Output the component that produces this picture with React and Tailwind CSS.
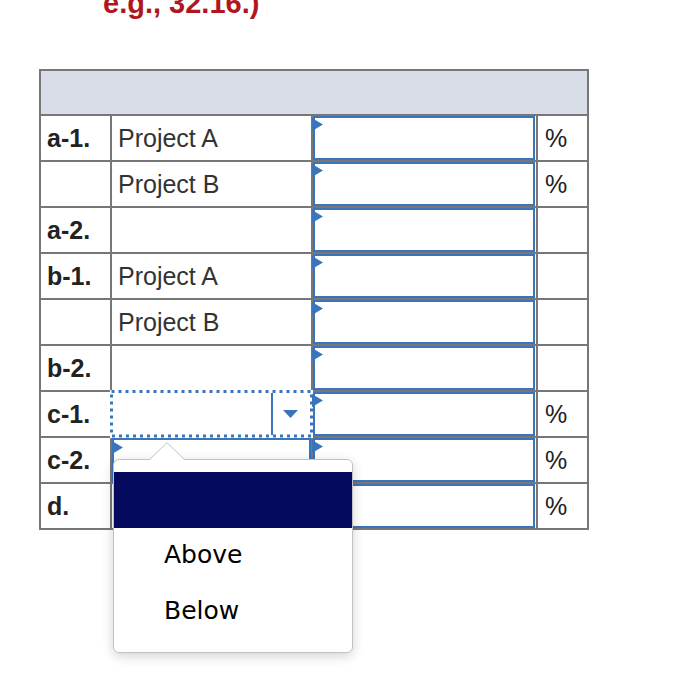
import React from "react";

const rows = [
  { label: "a-1.", name: "Project A", pct: true },
  { label: "", name: "Project B", pct: true },
  { label: "a-2.", name: "", pct: false },
  { label: "b-1.", name: "Project A", pct: false },
  { label: "", name: "Project B", pct: false },
  { label: "b-2.", name: "", pct: false },
  { label: "c-1.", name: "", pct: true, select: "focus" },
  { label: "c-2.", name: "", pct: true, select: "plain" },
  { label: "d.", name: "", pct: true },
];

function Marker({ className = "" }) {
  return (
    <svg
      className={"absolute " + className}
      width="11"
      height="13"
      viewBox="0 0 11 13"
    >
      <polygon points="0,0 11,6.5 0,13" fill="#3a74ba" />
    </svg>
  );
}

function Row({ r }) {
  return (
    <div className="grid h-[46px] grid-cols-[71px_201px_225px_49px] border-x-2 border-b-2 border-[#777777]">
      <div className="flex items-center border-r-2 border-[#777777] pl-[6px] pt-[2px] text-[25px] font-bold text-[#222222]">
        {r.label}
      </div>
      <div className="relative flex items-center border-r-2 border-[#777777] pl-[6px] pt-[2px] text-[25px] text-[#333333]">
        {r.name}
        {r.select === "focus" && (
          <div className="absolute inset-[-2px] z-10 flex bg-white p-[3px]">
            <svg
              className="absolute left-0 top-0"
              width="203"
              height="48"
              viewBox="0 0 203 48"
            >
              <rect
                x="1.5"
                y="1.5"
                width="200"
                height="44.5"
                fill="none"
                stroke="#3a74ba"
                strokeWidth="3"
                strokeDasharray="3 4"
              />
            </svg>
            <div className="flex-1" />
            <div className="flex w-[39px] items-center justify-center border-l-2 border-[#3a74ba] pr-[3px]">
              <svg width="15" height="8" viewBox="0 0 15 8">
                <polygon points="0,0 15,0 7.5,8" fill="#3a74ba" />
              </svg>
            </div>
          </div>
        )}
        {r.select === "plain" && (
          <div className="absolute inset-0 border-2 border-[#3a74ba] bg-white">
            <Marker className="left-[-2px] top-[1px]" />
          </div>
        )}
      </div>
      <div className="relative border-r-2 border-[#777777] pr-[1px]">
        <div className="h-full w-full border-2 border-[#3a74ba] bg-white" />
        <Marker className="left-[-1px] top-[2px] z-20" />
      </div>
      <div className="flex items-center pl-[7px] pt-[2px] text-[25px] text-[#222222]">
        {r.pct ? "%" : ""}
      </div>
    </div>
  );
}

export default function App() {
  return (
    <div className="min-h-[682px] w-[674px] bg-white">
      <div className="flex h-[69px] items-start pl-[103px]">
        <div
          className="-mt-[11px] text-[29px] font-bold leading-none text-[#b0161f]"
          style={{ fontFamily: '"Liberation Sans", Arial, sans-serif' }}
        >
          e.g., 32.16.)
        </div>
      </div>

      <div
        className="relative ml-[39px] w-[550px]"
        style={{ fontFamily: '"Liberation Sans", Arial, sans-serif' }}
      >
        <div className="h-[47px] border-2 border-[#777777] bg-[#d9dde7]" />
        {rows.map((r, i) => (
          <Row key={i} r={r} />
        ))}

        {/* dropdown popup */}
        <div className="absolute left-[74px] top-[390px] z-30 w-[240px]">
          <div className="rounded-[6px] border border-[#c2c2c2] bg-white pb-[12px] pt-[12px] shadow-[0_3px_12px_rgba(0,0,0,0.18)]">
            <div className="h-[56px] bg-[#050a5f]" />
            <div
              className="flex h-[56px] items-center pb-[2px] pl-[50px] text-[25px] text-black"
              style={{ fontFamily: '"DejaVu Sans", Verdana, sans-serif' }}
            >
              Above
            </div>
            <div
              className="flex h-[56px] items-center pb-[2px] pl-[50px] text-[25px] text-black"
              style={{ fontFamily: '"DejaVu Sans", Verdana, sans-serif' }}
            >
              Below
            </div>
          </div>
          <svg
            className="absolute left-[36px] top-[-17px]"
            width="36"
            height="19"
            viewBox="0 0 36 19"
          >
            <path d="M1 17.5 L18 0.7 L35 17.5 Z" fill="#ffffff" />
            <path
              d="M0.5 17.5 L18 0.7 L35.5 17.5"
              fill="none"
              stroke="#c2c2c2"
              strokeWidth="1"
            />
            <rect x="1.5" y="17" width="33" height="2" fill="#ffffff" />
          </svg>
        </div>
      </div>
    </div>
  );
}
